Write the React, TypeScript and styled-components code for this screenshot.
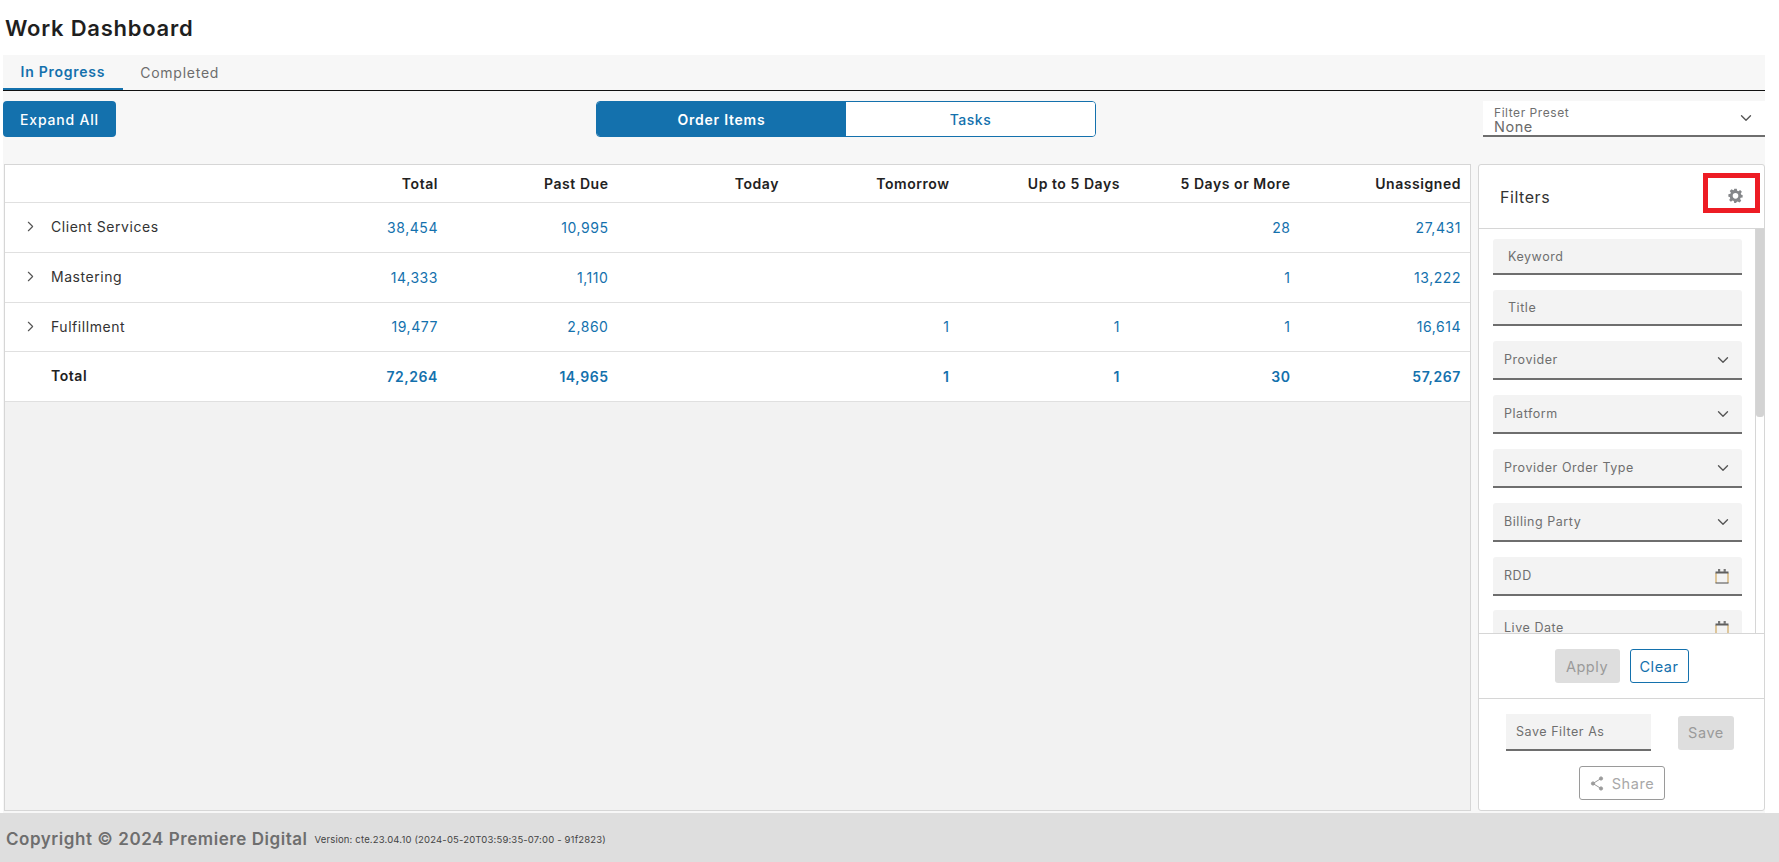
import { createGlobalStyle } from "styled-components";
import styled from "styled-components";
import { ChevronDown, ChevronRight } from "lucide-react";

const blue = "#1471ad";
const line = "#d6d6d6";
const fontStack = `Inter, "Open Sans", "Liberation Sans", sans-serif`;

const GlobalStyle = createGlobalStyle`
    html, body {
        margin: 0;
        padding: 0;
        background: #fff;
        font-family: ${fontStack};
        letter-spacing: 0.55px;
        color: #222;
    }
    * {
        box-sizing: border-box;
    }
    button {
        letter-spacing: inherit;
    }
`;

interface RowData {
    label: string;
    values: string[];
}

const columns = ["Total", "Past Due", "Today", "Tomorrow", "Up to 5 Days", "5 Days or More", "Unassigned"];

const rows: RowData[] = [
    { label: "Client Services", values: ["38,454", "10,995", "", "", "", "28", "27,431"] },
    { label: "Mastering", values: ["14,333", "1,110", "", "", "", "1", "13,222"] },
    { label: "Fulfillment", values: ["19,477", "2,860", "", "1", "1", "1", "16,614"] },
];

const totals = ["72,264", "14,965", "", "1", "1", "30", "57,267"];

const GearIcon = () => (
    <svg width="15" height="15" viewBox="0 0 24 24" fill="#85878a">
        <path
            fillRule="evenodd"
            d="M10 1h4l.7 3.2 1.9.8 2.8-1.8 2.8 2.8-1.8 2.8.8 1.9L23.4 11v4l-3.2.7-.8 1.9 1.8 2.8-2.8 2.8-2.8-1.8-1.9.8L13 24h-3l-.7-3.2-1.9-.8-2.8 1.8-2.8-2.8 1.8-2.8-.8-1.9L.6 14v-4l3.2-.7.8-1.9L2.8 4.6l2.8-2.8 2.8 1.8 1-.6zM12 8a4.5 4.5 0 1 0 0 9 4.5 4.5 0 0 0 0-9z"
        />
    </svg>
);

const CalendarIcon = () => (
    <CalendarSvg width="14" height="16" viewBox="0 0 14 16" fill="none">
        <path d="M1 5V15M13 5V15" stroke="#d0a860" strokeWidth="1.2" />
        <path d="M.5 15H13.5" stroke="#666" strokeWidth="1.2" />
        <rect x=".5" y="3.5" width="13" height="2" fill="#5f5f5f" />
        <rect x="3" y="1" width="2.2" height="3" fill="#777" />
        <rect x="8.6" y="1" width="2.2" height="3" fill="#777" />
    </CalendarSvg>
);

const ShareIcon = () => (
    <svg width="14" height="15" viewBox="0 0 14 15" fill="#9a9a9a" stroke="#9a9a9a">
        <line x1="11" y1="2.5" x2="3" y2="7.5" strokeWidth="1" />
        <line x1="3" y1="7.5" x2="11" y2="12.5" strokeWidth="1" />
        <circle cx="11" cy="2.5" r="1.6" />
        <circle cx="3" cy="7.5" r="1.6" />
        <circle cx="11" cy="12.5" r="1.6" />
    </svg>
);

export default function App() {
    return (
        <Page>
            <GlobalStyle />
            <Main>
                <Title>Work Dashboard</Title>
                <Workspace>
                    <Tabs>
                        <Tab $active>In Progress</Tab>
                        <Tab>Completed</Tab>
                    </Tabs>
                    <Toolbar>
                        <PrimaryButton>Expand All</PrimaryButton>
                        <Segments>
                            <Segment $active>Order Items</Segment>
                            <Segment>Tasks</Segment>
                        </Segments>
                        <Preset>
                            <PresetText>
                                <PresetLabel>Filter Preset</PresetLabel>
                                <PresetValue>None</PresetValue>
                            </PresetText>
                            <ChevronDown size={18} color="#555" strokeWidth={1.8} />
                        </Preset>
                    </Toolbar>
                    <Content>
                        <TablePanel>
                            <HeaderRow>
                                <span />
                                {columns.map(column => (
                                    <HeaderCell key={column}>{column}</HeaderCell>
                                ))}
                            </HeaderRow>
                            {rows.map(row => (
                                <Row key={row.label}>
                                    <RowLabel>
                                        <ChevronRight size={17} color="#555" strokeWidth={1.6} />
                                        {row.label}
                                    </RowLabel>
                                    {row.values.map((value, index) => (
                                        <Value key={index}>{value}</Value>
                                    ))}
                                </Row>
                            ))}
                            <Row>
                                <TotalLabel>Total</TotalLabel>
                                {totals.map((value, index) => (
                                    <Value key={index} $bold>
                                        {value}
                                    </Value>
                                ))}
                            </Row>
                        </TablePanel>
                        <FilterPanel>
                            <FilterHeader>
                                <FilterTitle>Filters</FilterTitle>
                                <GearSlot>
                                    <GearIcon />
                                </GearSlot>
                            </FilterHeader>
                            <FilterScroller>
                                <FilterBody>
                                    <TextField>Keyword</TextField>
                                    <TextField>Title</TextField>
                                    <Field>
                                        Provider
                                        <ChevronDown size={18} color="#555" strokeWidth={1.8} />
                                    </Field>
                                    <Field>
                                        Platform
                                        <ChevronDown size={18} color="#555" strokeWidth={1.8} />
                                    </Field>
                                    <Field>
                                        Provider Order Type
                                        <ChevronDown size={18} color="#555" strokeWidth={1.8} />
                                    </Field>
                                    <Field>
                                        Billing Party
                                        <ChevronDown size={18} color="#555" strokeWidth={1.8} />
                                    </Field>
                                    <Field>
                                        RDD
                                        <CalendarIcon />
                                    </Field>
                                    <Field>
                                        Live Date
                                        <CalendarIcon />
                                    </Field>
                                </FilterBody>
                                <ScrollTrack>
                                    <ScrollThumb />
                                </ScrollTrack>
                            </FilterScroller>
                            <Actions>
                                <DisabledButton>Apply</DisabledButton>
                                <OutlineButton>Clear</OutlineButton>
                            </Actions>
                            <SaveSection>
                                <SaveRow>
                                    <SaveField>Save Filter As</SaveField>
                                    <SaveButton>Save</SaveButton>
                                </SaveRow>
                                <ShareButton>
                                    <ShareIcon />
                                    Share
                                </ShareButton>
                            </SaveSection>
                        </FilterPanel>
                    </Content>
                </Workspace>
            </Main>
            <Footer>
                <Copyright>Copyright © 2024 Premiere Digital</Copyright>
                <Version>Version: cte.23.04.10 (2024-05-20T03:59:35-07:00 - 91f2823)</Version>
            </Footer>
        </Page>
    );
}

const CalendarSvg = styled.svg`
    margin-right: 3px;
    margin-top: 1px;
`;

const Page = styled.div`
    height: 862px;
    display: flex;
    flex-direction: column;
    overflow: hidden;
`;

const Main = styled.main`
    flex: 1;
    min-height: 0;
    display: flex;
    flex-direction: column;
    padding: 0 14px 0 3px;
`;

const Title = styled.h1`
    margin: 0;
    height: 55px;
    padding: 16px 0 0 2px;
    font-size: 22px;
    line-height: 24px;
    font-weight: 600;
    letter-spacing: 0.75px;
    color: #1f1f1f;
`;

const Workspace = styled.div`
    flex: 1;
    min-height: 0;
    display: flex;
    flex-direction: column;
    background: #f7f7f7;
`;

const Tabs = styled.div`
    height: 36px;
    flex: none;
    display: flex;
    border-bottom: 1px solid #111;
`;

const Tab = styled.div<{ $active?: boolean }>`
    height: 35px;
    padding: 0 17.5px;
    display: flex;
    align-items: center;
    font-size: 14px;
    letter-spacing: 0.75px;
    font-weight: ${p => (p.$active ? 600 : 400)};
    color: ${p => (p.$active ? blue : "#6d6d6d")};
    border-bottom: ${p => (p.$active ? `2px solid ${blue}` : "none")};
`;

const Toolbar = styled.div`
    height: 73px;
    flex: none;
    display: grid;
    grid-template-columns: 593px 500px 1fr;
    padding-top: 10px;
    align-items: start;
`;

const PrimaryButton = styled.button`
    width: 113px;
    height: 36px;
    border: none;
    border-radius: 4px;
    background: ${blue};
    color: #fff;
    letter-spacing: 0.8px;
    font: 500 14px ${fontStack};
`;

const Segments = styled.div`
    height: 36px;
    display: flex;
    border: 1px solid ${blue};
    border-radius: 4px;
    overflow: hidden;
`;

const Segment = styled.div<{ $active?: boolean }>`
    flex: 1;
    display: flex;
    align-items: center;
    justify-content: center;
    font-size: 14px;
    font-weight: ${p => (p.$active ? 600 : 500)};
    letter-spacing: ${p => (p.$active ? "0.75px" : "0.5px")};
    color: ${p => (p.$active ? "#fff" : blue)};
    background: ${p => (p.$active ? blue : "#fff")};
`;

const Preset = styled.div`
    margin-left: 387px;
    height: 36px;
    padding: 0 10px 0 11px;
    display: flex;
    align-items: center;
    justify-content: space-between;
    background: #fff;
    border-bottom: 2px solid #6e6e6e;
`;

const PresetText = styled.div`
    display: flex;
    flex-direction: column;
    padding-top: 3px;
`;

const PresetLabel = styled.span`
    font-size: 12px;
    line-height: 13px;
    color: #6f6f6f;
`;

const PresetValue = styled.span`
    font-size: 14.5px;
    line-height: 15px;
    color: #6a6a6a;
`;

const Content = styled.div`
    flex: 1;
    min-height: 0;
    display: flex;
    gap: 7px;
    padding: 0 0 2px 1px;
`;

const TablePanel = styled.section`
    width: 1467px;
    flex: none;
    background: #f2f2f2;
    border: 1px solid ${line};
`;

const gridColumns = "1fr repeat(7, 170.5px)";

const HeaderRow = styled.div`
    height: 38px;
    display: grid;
    grid-template-columns: ${gridColumns};
    align-items: center;
    background: #fff;
    border-bottom: 1px solid #e0e0e0;
`;

const HeaderCell = styled.div`
    text-align: right;
    padding-right: 9px;
    font-size: 14px;
    font-weight: 600;
    color: #222;
`;

const Row = styled.div`
    height: 49.75px;
    display: grid;
    grid-template-columns: ${gridColumns};
    align-items: center;
    background: #fff;
    border-bottom: 1px solid #e0e0e0;
`;

const RowLabel = styled.div`
    display: flex;
    align-items: center;
    gap: 12px;
    padding-left: 17px;
    font-size: 14px;
    color: #333;
    margin-top: -1px;
`;

const TotalLabel = styled.div`
    padding-left: 46px;
    font-size: 14px;
    font-weight: 600;
    color: #222;
    margin-top: -2px;
`;

const Value = styled.div<{ $bold?: boolean }>`
    text-align: right;
    padding-right: 9px;
    font-size: 14px;
    font-weight: ${p => (p.$bold ? 600 : 400)};
    color: ${blue};
`;

const FilterPanel = styled.aside`
    flex: 1;
    min-width: 0;
    display: flex;
    flex-direction: column;
    background: #fff;
    border: 1px solid ${line};
    border-radius: 3px;
`;

const FilterHeader = styled.div`
    height: 64px;
    flex: none;
    padding: 0 21px 0 21px;
    display: flex;
    align-items: center;
    justify-content: space-between;
    border-bottom: 1px solid ${line};
`;

const FilterTitle = styled.div`
    font-size: 16px;
    color: #333;
`;

const GearSlot = styled.div`
    position: relative;
    display: flex;
    margin-bottom: 2px;

    &::after {
        content: "";
        box-sizing: border-box;
        position: absolute;
        left: -25px;
        top: -15px;
        width: 57px;
        height: 40px;
        border: 5px solid #ed1c24;
    }
`;

const FilterScroller = styled.div`
    position: relative;
    flex: 1;
    min-height: 0;
    overflow: hidden;
`;

const FilterBody = styled.div`
    padding: 10px 22px 0 14px;
    display: flex;
    flex-direction: column;
    gap: 15px;
`;

const ScrollTrack = styled.div`
    position: absolute;
    top: 0;
    right: 0;
    bottom: 0;
    width: 9px;
    background: #fff;
    border-left: 1px solid ${line};
`;

const ScrollThumb = styled.div`
    width: 100%;
    height: 188px;
    background: #d3d3d3;
    border-radius: 0 0 3px 3px;
`;

const Field = styled.div`
    height: 39px;
    flex: none;
    padding: 0 10px 0 11px;
    display: flex;
    align-items: center;
    justify-content: space-between;
    font-size: 12.5px;
    color: #6f6f6f;
    background: #f3f3f3;
    border-bottom: 2px solid #6e6e6e;
    border-radius: 3px 3px 0 0;

    &:last-child {
        margin-top: -1px;
        padding-bottom: 3px;
    }
`;

const TextField = styled(Field)`
    height: 36px;
    padding-left: 15px;
`;

const Actions = styled.div`
    height: 65px;
    flex: none;
    display: flex;
    align-items: center;
    justify-content: center;
    gap: 10px;
    border-top: 1px solid ${line};
`;

const DisabledButton = styled.button`
    width: 65px;
    height: 34px;
    border: none;
    border-radius: 3px;
    background: #dedede;
    color: #9a9a9a;
    font: 400 14.5px ${fontStack};
`;

const OutlineButton = styled.button`
    width: 59px;
    height: 34px;
    border: 1px solid ${blue};
    border-radius: 3px;
    background: #fff;
    color: ${blue};
    font: 400 14.5px ${fontStack};
`;

const SaveSection = styled.div`
    height: 112px;
    flex: none;
    display: flex;
    flex-direction: column;
    align-items: center;
    gap: 15px;
    padding-top: 15px;
    border-top: 1px solid ${line};
`;

const SaveRow = styled.div`
    width: 228px;
    margin-right: 3px;
    display: flex;
    align-items: center;
    justify-content: space-between;
`;

const SaveField = styled.div`
    width: 145px;
    height: 37px;
    padding-left: 10px;
    display: flex;
    align-items: center;
    font-size: 12.5px;
    color: #6f6f6f;
    background: #f3f3f3;
    border-bottom: 2px solid #6e6e6e;
`;

const SaveButton = styled(DisabledButton)`
    width: 56px;
`;

const ShareButton = styled.button`
    width: 86px;
    height: 34px;
    margin-left: 1px;
    display: flex;
    align-items: center;
    justify-content: center;
    gap: 8px;
    border: 1px solid #9a9a9a;
    border-radius: 3px;
    background: #fff;
    color: #a8a8a8;
    font: 400 14.5px ${fontStack};
`;

const Footer = styled.footer`
    height: 49px;
    flex: none;
    padding: 3px 6px 0 6px;
    display: flex;
    align-items: center;
    gap: 7px;
    background: #dedede;
`;

const Copyright = styled.span`
    font-size: 17px;
    font-weight: 600;
    color: #6e6e6e;
`;

const Version = styled.span`
    font-size: 9.5px;
    letter-spacing: 0.17px;
    color: #444;
`;
